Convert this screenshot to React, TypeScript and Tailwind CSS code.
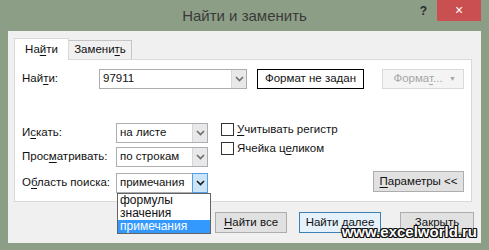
import type { ReactNode } from 'react'

function U({ children }: { children: ReactNode }) {
  return <span className="underline underline-offset-[2px]">{children}</span>
}

function Chevron({ className = 'stroke-[#6d6d6d]' }: { className?: string }) {
  return (
    <svg width="9" height="6" viewBox="0 0 9 6" className={className} fill="none" strokeWidth="1.6">
      <polyline points="1,1 4.5,4.5 8,1" />
    </svg>
  )
}

function Select({ value, width, active = false }: { value: string; width: string; active?: boolean }) {
  return (
    <div className={`flex h-[20px] ${width} border border-[#abadb3] bg-white`}>
      <div className="flex-1 flex items-center pl-[3px] text-[#111]">{value}</div>
      {active ? (
        <div className="w-[16px] flex items-center justify-center border border-[#569de5] bg-[#cce4f7] -my-px -mr-px">
          <Chevron className="stroke-[#1b1b1b]" />
        </div>
      ) : (
        <div className="w-[15px] flex items-center justify-center border-l border-[#d6d6d6] bg-[#e8e8e8]">
          <Chevron />
        </div>
      )}
    </div>
  )
}

function Checkbox({ children }: { children: ReactNode }) {
  return (
    <div className="flex items-center h-[13px]">
      <div className="w-[13px] h-[13px] border border-[#333] bg-white" />
      <span className="ml-[3px] text-[#111]">{children}</span>
    </div>
  )
}

function Button({ children, width, primary = false }: { children: ReactNode; width: string; primary?: boolean }) {
  return (
    <div
      className={`h-[21px] ${width} flex items-center justify-center border ${
        primary ? 'border-[#3c7fb1] bg-[#e5f1fb]' : 'border-[#adadad] bg-[#e1e1e1]'
      } text-[#111]`}
    >
      {children}
    </div>
  )
}

export default function App() {
  return (
    <div className="relative w-[489px] h-[250px] overflow-hidden bg-[#8d9e87] font-['Liberation_Sans',Arial,sans-serif] text-[11.5px]">
      {/* Title bar */}
      <div className="grid grid-cols-[1fr_auto_1fr] h-[31px]">
        <div />
        <div className="flex items-center pt-[1px] text-[15px] text-[#3a3a3a]">Найти и заменить</div>
        <div className="flex justify-end items-start pr-[8px]">
          <div className="w-[27px] h-[21px] flex items-center justify-center text-[12px] font-bold text-[#2a2a2a]">?</div>
          <div className="w-[44px] h-[21px] flex items-center justify-center bg-[#c94f50] text-white text-[14px]">
            ×
          </div>
        </div>
      </div>

      {/* Client area */}
      <div className="mx-[8px] h-[212px] bg-[#f0f0f0] pl-[6px] pt-[7px]">
        {/* Tabs */}
        <div className="flex items-end h-[21px]">
          <div className="relative z-10 -mb-px h-[22px] w-[55px] flex items-center justify-center bg-white border border-b-0 border-[#d9d9d9] text-[#111]">
            На<U>й</U>ти
          </div>
          <div className="h-[19px] w-[63px] flex items-center justify-center bg-[#f0f0f0] border border-l-0 border-b-0 border-[#c5c5c5] text-[#111]">
            Замени<U>т</U>ь
          </div>
        </div>

        {/* Panel */}
        <div className="relative mr-[9px] h-[143px] bg-white border border-[#d9d9d9] px-[7px] pt-[9px]">
          <div className="flex items-center h-[20px]">
            <div className="w-[77px] text-[#111]">
              Най<U>т</U>и:
            </div>
            <Select value="97911" width="w-[148px]" />
            <div className="ml-[10px] w-[107px] h-[20px] flex items-center justify-center border border-black text-[#111]">
              Формат не задан
            </div>
            <div className="ml-[18px] w-[82px] h-[20px] flex items-center border border-[#dadada] bg-[#f4f4f4] text-[#a6a6a6]">
              <span className="flex-1 text-center pl-[4px]">
                Форма<U>т</U>...
              </span>
              <span className="w-[14px] text-[7px]">▼</span>
            </div>
          </div>

          <div className="flex mt-[34px]">
            <div>
              <div className="flex items-center h-[20px]">
                <div className="w-[94px] text-[#111]">
                  И<U>с</U>кать:
                </div>
                <Select value="на листе" width="w-[92px]" />
              </div>
              <div className="flex items-center h-[20px] mt-[4px]">
                <div className="w-[94px] text-[#111]">
                  Прос<U>м</U>атривать:
                </div>
                <Select value="по строкам" width="w-[92px]" />
              </div>
              <div className="flex items-center h-[20px] mt-[6px]">
                <div className="w-[94px] text-[#111]">
                  О<U>б</U>ласть поиска:
                </div>
                <Select value="примечания" width="w-[92px]" active />
              </div>
            </div>

            <div className="ml-[13px] flex flex-col gap-[6px]">
              <Checkbox>
                <U>У</U>читывать регистр
              </Checkbox>
              <Checkbox>
                Ячейка ц<U>е</U>ликом
              </Checkbox>
            </div>

            <div className="ml-auto self-end mb-[1px]">
              <Button width="w-[91px]">
                <U>П</U>араметры &lt;&lt;
              </Button>
            </div>
          </div>

          {/* Open dropdown list */}
          <div className="absolute left-[102px] top-[133px] z-20 w-[94px] h-[41px] border border-[#646464] bg-white text-[12px] text-[#111]">
            <div className="h-[13px] leading-[13px] px-[2px]">формулы</div>
            <div className="h-[13px] leading-[13px] px-[2px]">значения</div>
            <div className="h-[13px] leading-[13px] px-[2px] bg-[#3399ff] text-white">примечания</div>
          </div>
        </div>

        {/* Bottom buttons */}
        <div className="flex justify-end pr-[7px] mt-[10px]">
          <Button width="w-[72px]">
            <U>Н</U>айти все
          </Button>
          <div className="ml-[12px]">
            <Button width="w-[82px]" primary>
              Найти да<U>л</U>ее
            </Button>
          </div>
          <div className="ml-[19px]">
            <Button width="w-[74px]">Закрыть</Button>
          </div>
        </div>
      </div>

      {/* Watermark */}
      <div className="absolute right-[12px] bottom-[11px] text-[15px] font-bold text-white leading-none [text-shadow:-1px_-1px_0_#111,1px_-1px_0_#111,-1px_1px_0_#111,1px_1px_0_#111,0_1px_0_#111,0_-1px_0_#111,1px_0_0_#111,-1px_0_0_#111]">
        www.excelworld.ru
      </div>
    </div>
  )
}
